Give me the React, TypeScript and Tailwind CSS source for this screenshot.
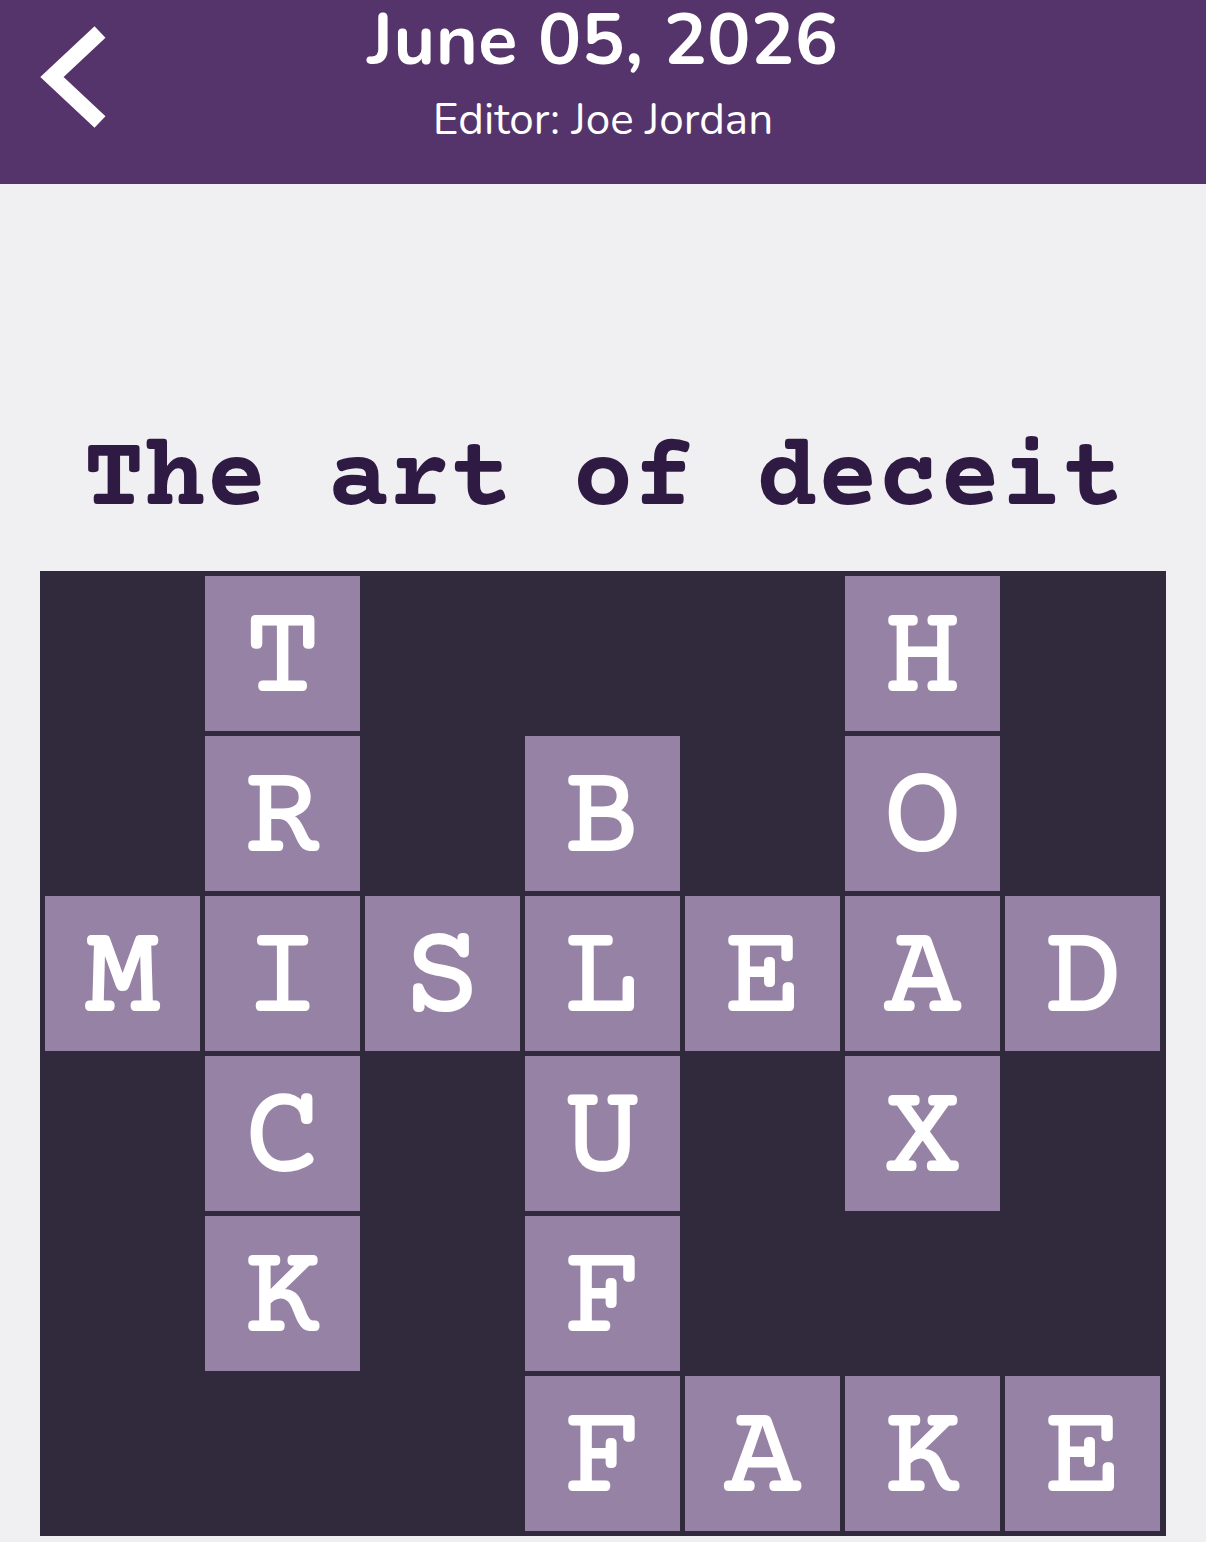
type Cell = string | null;

const board: Cell[][] = [
  [null, "T", null, null, null, "H", null],
  [null, "R", null, "B", null, "O", null],
  ["M", "I", "S", "L", "E", "A", "D"],
  [null, "C", null, "U", null, "X", null],
  [null, "K", null, "F", null, null, null],
  [null, null, null, "F", "A", "K", "E"],
];

const mono = "font-['Courier_Prime','Courier_New','Liberation_Mono',monospace]";

function clsx(...parts: string[]) {
  return parts.join(" ");
}

const Header = () => {
  return (
    <header className="grid h-[184px] grid-cols-[1fr_auto_1fr] bg-[#54346b] text-white">
      <div className="flex items-start pl-[36px] pt-[24px]">
        <svg width="76" height="110" viewBox="0 0 76 110" className="block">
          <polyline
            points="64,8 16,53 64,98"
            fill="none"
            stroke="white"
            strokeWidth="16"
            strokeLinejoin="miter"
          />
        </svg>
      </div>
      <div className="flex flex-col items-center font-['Nunito','Lato',sans-serif]">
        <h1 className="text-[72px] font-bold leading-[80px] tracking-[0.5px]">
          June 05, 2026
        </h1>
        <p className="mt-[16px] text-[44px] leading-[48px]">Editor: Joe Jordan</p>
      </div>
      <div />
    </header>
  );
};

const Tile = ({ letter }: { letter: Cell }) => {
  if (!letter) return <div className="h-[155px] w-[155px]" />;
  return (
    <div
      className={clsx(
        "flex h-[155px] w-[155px] items-center justify-center bg-[#9682a4] pt-[16px] text-[128px] leading-none text-white [-webkit-text-stroke:2px_white]",
        mono
      )}
    >
      {letter}
    </div>
  );
};

export default function App() {
  return (
    <div className="min-h-[1542px] bg-[#f0f0f2]">
      <Header />
      <h2
        className={clsx(
          "pt-[238px] text-center text-[102px] font-bold leading-[120px] text-[#2e1a42]",
          mono
        )}
      >
        The art of deceit
      </h2>
      <div className="mx-10 mt-[29px] grid grid-cols-[repeat(7,155px)] gap-[5px] bg-[#312a3c] p-[5px]">
        {board.flatMap((row, r) =>
          row.map((letter, c) => <Tile key={`${r}-${c}`} letter={letter} />)
        )}
      </div>
    </div>
  );
}
